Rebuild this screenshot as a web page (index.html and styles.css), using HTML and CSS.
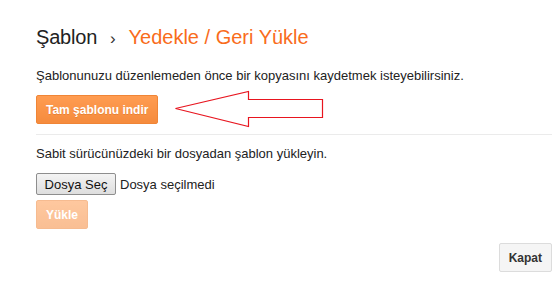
FILE: index.html
```html
<!DOCTYPE html>
<html lang="tr">
<head>
<meta charset="utf-8">
<link rel="stylesheet" href="styles.css">
</head>
<body>
<div class="dialog">
  <h1 class="title"><span class="crumb">Şablon</span><span class="sep">›</span><span class="current">Yedekle / Geri Yükle</span></h1>
  <section class="section first">
    <p class="text">Şablonunuzu düzenlemeden önce bir kopyasını kaydetmek isteyebilirsiniz.</p>
    <button class="btn primary">Tam şablonu indir</button>
  </section>
  <section class="section second">
    <p class="text">Sabit sürücünüzdeki bir dosyadan şablon yükleyin.</p>
    <div class="file-row"><span class="file-btn">Dosya Seç</span><span class="file-label">Dosya seçilmedi</span></div>
    <button class="btn primary disabled">Yükle</button>
  </section>
  <div class="footer"><button class="btn plain">Kapat</button></div>
  <svg class="arrow" width="560" height="293" viewBox="0 0 560 293">
    <polygon points="175.5,108.5 248.5,91.5 248.5,99.5 322.5,99.5 322.5,117.5 248.5,117.5 248.5,126.5" fill="none" stroke="#e8151f" stroke-width="1.2"/>
  </svg>
</div>
</body>
</html>
```

FILE: styles.css
```css
html, body {
  margin: 0;
  padding: 0;
  background: #fff;
}
body {
  font-family: "Liberation Sans", Arial, sans-serif;
  color: #222;
  width: 560px;
  height: 293px;
  overflow: hidden;
}
.dialog {
  position: relative;
  padding: 26px 8px 0 36px;
  width: 516px;
}
.title {
  margin: 0;
  font-weight: normal;
  font-size: 20px;
  line-height: 23px;
  display: flex;
  align-items: baseline;
  letter-spacing: -0.2px;
}
.crumb { color: #222; }
.sep {
  color: #333;
  font-size: 17px;
  margin: 0 13px 0 13px;
}
.current { color: #f96c1b; letter-spacing: 0; }
.section.first { margin-top: 18px; }
.text {
  margin: 0;
  font-size: 13px;
  line-height: 16px;
}
.btn {
  font-family: "Liberation Sans", Arial, sans-serif;
  font-size: 12px;
  font-weight: bold;
  border-radius: 2px;
  cursor: default;
  display: block;
}
.primary {
  color: #fff;
  background: linear-gradient(#ff9c51, #f58b3d);
  border: 1px solid #f08536;
  height: 29px;
  padding: 0 9px;
  margin-top: 11px;
  text-shadow: 0 1px 0 rgba(180, 80, 0, 0.25);
}
.section.first {
  padding-bottom: 10px;
  border-bottom: 1px solid #ebebeb;
}
.section.second { padding-top: 11px; }
.file-row {
  display: flex;
  align-items: center;
  margin-top: 11px;
  font-size: 13px;
}
.file-btn {
  box-sizing: border-box;
  height: 22px;
  width: 80px;
  display: flex;
  align-items: center;
  justify-content: center;
  font-size: 13px;
  color: #111;
  background: linear-gradient(#f4f4f4, #dedede);
  border: 1px solid #8e8e8e;
  border-radius: 2px;
}
.file-label {
  margin-left: 4px;
  color: #222;
}
.primary.disabled {
  margin-top: 5px;
  opacity: 0.55;
  padding: 0 9px;
  text-shadow: none;
}
.footer {
  display: flex;
  justify-content: flex-end;
  margin-top: 14px;
}
.plain {
  height: 29px;
  padding: 0 9px;
  color: #333;
  background: #f5f5f5;
  border: 1px solid #dcdcdc;
}
.arrow {
  position: absolute;
  left: 0;
  top: 0;
  pointer-events: none;
}
```
